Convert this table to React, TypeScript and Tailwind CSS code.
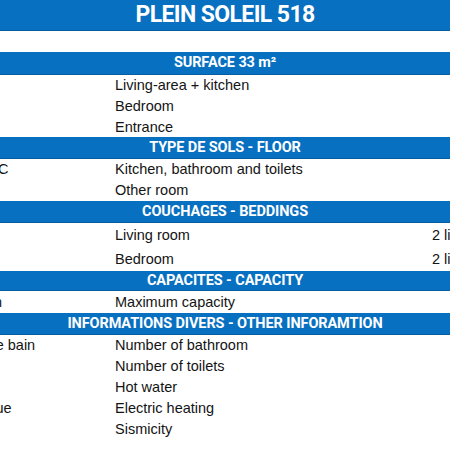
import React from "react";

type Row = { fr?: string; en: string; val?: string; h?: string };
type Section = { title: string; h: string; rows: Row[] };

const sections: Section[] = [
  {
    title: "SURFACE 33 m²",
    h: "h-[23px]",
    rows: [
      { fr: "Pièce de vie", en: "Living-area + kitchen", h: "h-[21px]" },
      { fr: "Chambre", en: "Bedroom", h: "h-[21px]" },
      { fr: "Entrée", en: "Entrance", h: "h-[20px]" },
    ],
  },
  {
    title: "TYPE DE SOLS - FLOOR",
    h: "h-[22px]",
    rows: [
      { fr: "Cuisine, SDB et WC", en: "Kitchen, bathroom and toilets", h: "h-[21px]" },
      { fr: "Autre pièce", en: "Other room", h: "h-[21px]" },
    ],
  },
  {
    title: "COUCHAGES - BEDDINGS",
    h: "h-[22px]",
    rows: [
      { fr: "Séjour", en: "Living room", val: "2 lits", h: "h-[24px]" },
      { fr: "Chambre", en: "Bedroom", val: "2 lits", h: "h-[24px]" },
    ],
  },
  {
    title: "CAPACITES - CAPACITY",
    h: "h-[20px]",
    rows: [{ fr: "Capacité maximum", en: "Maximum capacity", h: "h-[22px]" }],
  },
  {
    title: "INFORMATIONS DIVERS - OTHER INFORAMTION",
    h: "h-[22px]",
    rows: [
      { fr: "Nombre de salle de bain", en: "Number of bathroom", h: "h-[21px]" },
      { fr: "Nombre de WC", en: "Number of toilets", h: "h-[21px]" },
      { fr: "Eau chaude", en: "Hot water", h: "h-[21px]" },
      { fr: "Chauffage électrique", en: "Electric heating", h: "h-[21px]" },
      { fr: "Sismicité", en: "Sismicity", h: "h-[21px]" },
    ],
  },
];

const DataRow = ({ row }: { row: Row }) => (
  <div className={`flex items-center ${row.h} text-[14.5px] leading-none text-[#141414] whitespace-nowrap`}>
    <div className="w-[115px] shrink-0 overflow-hidden flex justify-end">
      <div className="w-[237px] shrink-0">{row.fr}</div>
    </div>
    <div className="w-[317px] shrink-0">{row.en}</div>
    <div className="flex-1 overflow-hidden">{row.val}</div>
  </div>
);

export default function App() {
  return (
    <div className="w-[450px] h-[450px] overflow-hidden bg-white font-['Liberation_Sans',sans-serif]">
      <div className="h-[31px] bg-[#0870c0] border-b border-[#0b5c9e] flex items-center justify-center text-white font-['Roboto',sans-serif] font-bold text-[23px] tracking-[-0.6px]">
        PLEIN SOLEIL 518
      </div>
      <div className="h-[21px]" />
      {sections.map((s, i) => (
        <div key={i}>
          <div
            className={`${s.h} bg-[#0870c0] border-b border-[#0b5c9e] flex items-center justify-center text-white font-['Roboto',sans-serif] font-bold text-[14.5px] tracking-[-0.1px] whitespace-nowrap`}
          >
            <span>{s.title}</span>
          </div>
          {s.rows.map((r, j) => (
            <DataRow key={j} row={r} />
          ))}
        </div>
      ))}
    </div>
  );
}
